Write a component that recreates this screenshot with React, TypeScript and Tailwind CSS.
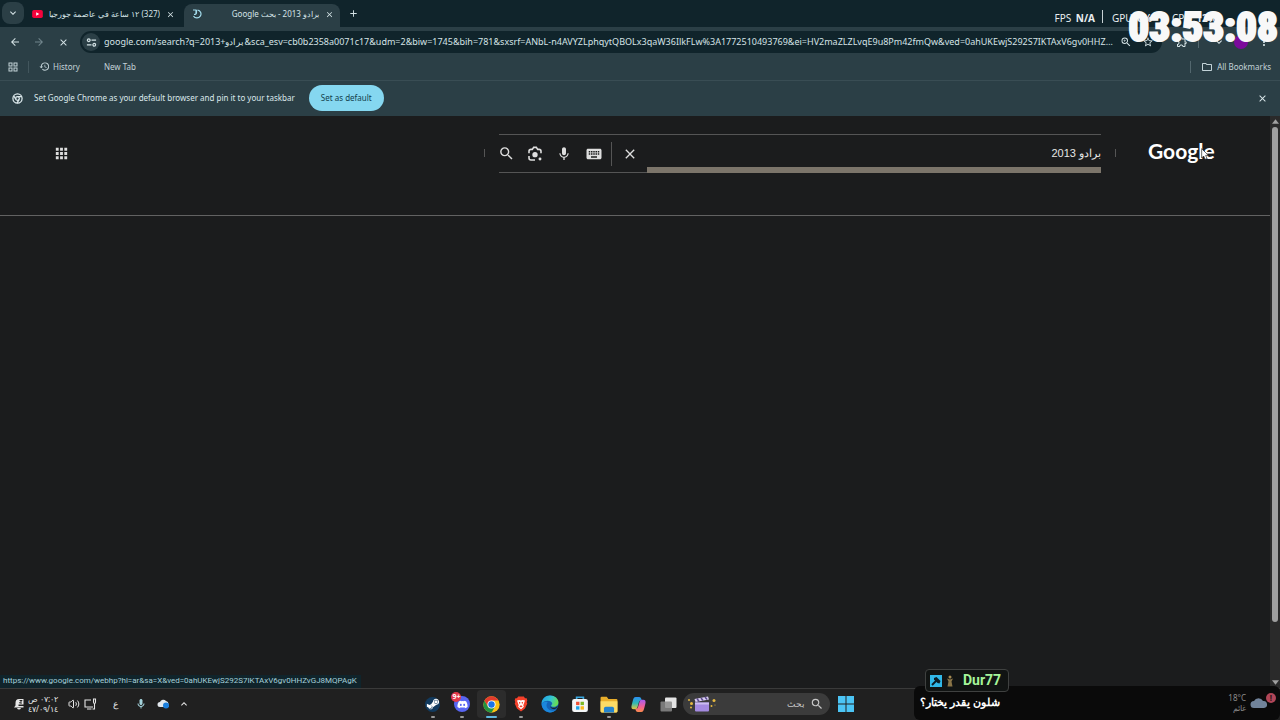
import type { ReactNode } from 'react'
import {
  MdAdd,
  MdApps,
  MdArrowBack,
  MdArrowForward,
  MdClose,
  MdExpandLess,
  MdExpandMore,
  MdHistory,
  MdKeyboard,
  MdMic,
  MdMoreVert,
  MdOutlineExtension,
  MdOutlineFolder,
  MdOutlineGridView,
  MdOutlineMic,
  MdSearch,
  MdStarBorder,
  MdZoomIn,
} from 'react-icons/md'
import { FaSteamSymbol, FaDiscord } from 'react-icons/fa'
import { Volume2 } from 'lucide-react'

const PAGE_URL =
  'google.com/search?q=2013+\u2068برادو\u2069&sca_esv=cb0b2358a0071c17&udm=2&biw=1745&bih=781&sxsrf=ANbL-n4AVYZLphqytQBOLx3qaW36IlkFLw%3A1772510493769&ei=HV2maZLZLvqE9u8Pm42fmQw&ved=0ahUKEwjS292S7IKTAxV6gv0HHZvGJ8MQPAgK'

function IconButton({
  label,
  className = '',
  children,
}: {
  label: string
  className?: string
  children: ReactNode
}) {
  return (
    <button
      type="button"
      aria-label={label}
      className={`flex shrink-0 items-center justify-center ${className}`}
    >
      {children}
    </button>
  )
}

function ChromeLogo({ className }: { className: string }) {
  return (
    <svg viewBox="0 0 48 48" className={className}>
      <circle cx="24" cy="24" r="23" fill="#fbc116" />
      <path d="M4.1 12.5A23 23 0 0 0 24 47l10-17.3-10-5.7-10 5.7Z" fill="#229342" />
      <path d="M4.1 12.5A23 23 0 0 1 43.9 12.5H24L14 29.5Z" fill="#e33b2e" />
      <circle cx="24" cy="24" r="11.5" fill="#fff" />
      <circle cx="24" cy="24" r="9" fill="#1a73e8" />
    </svg>
  )
}

function ChromeMono({ className }: { className: string }) {
  return (
    <svg viewBox="0 0 24 24" className={className} fill="none" stroke="currentColor" strokeWidth="2.8">
      <circle cx="12" cy="12" r="10" />
      <circle cx="12" cy="12" r="4" />
      <path d="M12 8h9M8.5 14 4 6.5M15.5 14 11 22" />
    </svg>
  )
}

function TuneIcon() {
  return (
    <svg viewBox="0 0 24 24" className="h-[11px] w-[11px]" fill="none" stroke="currentColor" strokeWidth="2.6">
      <path d="M12 7h10M2 17h10" />
      <circle cx="6" cy="7" r="3" />
      <circle cx="18" cy="17" r="3" />
    </svg>
  )
}

function LensIcon() {
  return (
    <svg viewBox="0 0 24 24" className="h-4 w-4" fill="none" stroke="currentColor" strokeWidth="2.4">
      <path d="M3 11V8q0-3 3-3h2l2-3h4l2 3h2q3 0 3 3v3M3 15v3q0 3 3 3h6" />
      <circle cx="12" cy="13" r="4" fill="currentColor" stroke="none" />
      <circle cx="19.5" cy="19.5" r="2.2" fill="currentColor" stroke="none" />
    </svg>
  )
}

function BellIcon() {
  return (
    <svg viewBox="0 0 24 24" className="h-3 w-3" fill="currentColor">
      <path d="M5 10q0-8 7-8h9v11H11v3h10v3H2l3-4ZM8 20h8q-1 3-4 3t-4-3Z" />
      <path d="M13 5h5l-5 5h5" fill="none" stroke="#202020" strokeWidth="2" />
    </svg>
  )
}

function DeviceIcon() {
  return (
    <svg viewBox="0 0 26 24" className="ml-1 h-3 w-[13px]" fill="none" stroke="currentColor" strokeWidth="2.2">
      <path d="M14 4H2v14h16M6 22h9M19 2v6q0 3 2 3t2-3V2ZM21 11v11h-4" />
    </svg>
  )
}

function BraveLogo() {
  return (
    <svg viewBox="0 0 24 28" className="h-4 w-4">
      <path d="M7 1h10l2 3 3 0 1 4-1 3 1 2-4 9-7 5-7-5-4-9 1-2-1-3 1-4h3Z" fill="#f4402a" />
      <path d="m5 8 4-1 3 1 3-1 4 1-3 8 1 3-5 4-5-4 1-3Z" fill="#fff" />
      <path d="m8 10 3 1-1 4ZM16 10l-3 1 1 4ZM9 18l3-2 3 2-3 2Z" fill="#f4402a" />
    </svg>
  )
}

function EdgeLogo() {
  return (
    <svg viewBox="0 0 32 32" className="h-[18px] w-[18px]">
      <defs>
        <linearGradient id="edge-top" x1="0" y1="0" x2="1" y2="0.3">
          <stop offset="0" stopColor="#1f9be8" />
          <stop offset="0.6" stopColor="#35c6d0" />
          <stop offset="1" stopColor="#66dc57" />
        </linearGradient>
      </defs>
      <circle cx="16" cy="16" r="15" fill="#1464b8" />
      <path d="M1 16C1 7 8 1 16 1c9 0 15 6 15 12 0 5-4 8-8 8-3 0-5-1-5-2s2-2 2-4c0-3-4-5-8-5-5 0-9 2-11 6Z" fill="url(#edge-top)" />
      <path d="M12 13c-3 3-3 9 1 12 4 4 10 4 15 0-3 4-7 6-12 6C9 31 2 26 1 17c2-4 6-6 11-4Z" fill="#1b87dc" />
      <path d="M17 15c-2 3-1 6 2 7 4 2 8 0 11-3-1 3-3 5-5 6-6 1-11-4-8-10Z" fill="#1d2526" />
    </svg>
  )
}

function StoreLogo() {
  return (
    <svg viewBox="0 0 32 32" className="h-[18px] w-[18px]">
      <path d="M10 8V4h12v4" fill="none" stroke="#3aa7df" strokeWidth="3" />
      <rect x="2" y="7" width="28" height="23" rx="4" fill="#f4f6f7" />
      <path d="M9 12h6v6H9Z" fill="#ef5136" />
      <path d="M17 12h6v6h-6Z" fill="#7dba24" />
      <path d="M9 20h6v6H9Z" fill="#1ca3e8" />
      <path d="M17 20h6v6h-6Z" fill="#fbb81b" />
    </svg>
  )
}

function ExplorerLogo() {
  return (
    <svg viewBox="0 0 32 30" className="h-[17px] w-[18px]">
      <path d="M1 3q0-2 2-2h9l3 4h14q2 0 2 2v20q0 2-2 2H3q-2 0-2-2Z" fill="#e9ae2b" />
      <path d="M1 9h30v18q0 2-2 2H3q-2 0-2-2Z" fill="#fbdb66" />
      <path d="M7 29v-7q0-3 3-3h12q3 0 3 3v7Z" fill="#2383cf" />
    </svg>
  )
}

function CopilotLogo() {
  return (
    <svg viewBox="0 0 32 32" className="h-[17px] w-[17px]">
      <defs>
        <linearGradient id="copilot-left" x1="0" y1="0" x2="0" y2="1">
          <stop offset="0" stopColor="#2b8ff2" />
          <stop offset="0.5" stopColor="#2fb9b5" />
          <stop offset="1" stopColor="#e9c83a" />
        </linearGradient>
        <linearGradient id="copilot-right" x1="0" y1="0" x2="0" y2="1">
          <stop offset="0" stopColor="#a65cf0" />
          <stop offset="0.55" stopColor="#f0609a" />
          <stop offset="1" stopColor="#fb8a4b" />
        </linearGradient>
      </defs>
      <path d="M22 8c-1-4-2-6-5-6h-6C7 2 6 6 5 10L3 18c-1 4 0 7 4 7h3c3 0 4-3 5-7l2-7c1-2 2-3 5-3Z" fill="url(#copilot-left)" />
      <path d="M10 24c1 4 2 6 5 6h6c4 0 5-4 6-8l2-8c1-4 0-7-4-7h-3c-3 0-4 3-5 7l-2 7c-1 2-2 3-5 3Z" fill="url(#copilot-right)" />
    </svg>
  )
}

function TaskViewIcon() {
  return (
    <svg viewBox="0 0 34 30" className="h-[15px] w-[17px]">
      <rect x="10" y="1" width="23" height="21" rx="2" fill="#e4e4e4" />
      <rect x="1" y="9" width="23" height="20" rx="2" fill="#8a8a8a" fillOpacity="0.85" />
    </svg>
  )
}

function ClapperIcon() {
  return (
    <svg viewBox="0 0 60 32" className="h-4 w-[30px]">
      <path d="M16 13h28v16q0 2-2 2H18q-2 0-2-2Z" fill="#a48ae0" />
      <path d="m15 6 27-5 2 6-27 5Z" fill="#d9cdf2" />
      <path d="m20 5 4 6M28 4l4 5M36 2l4 5" stroke="#5b4a8c" strokeWidth="3" />
      <path d="M16 13h28v4H16Z" fill="#cbbcf0" />
      <g fill="#e6b93f">
        <circle cx="4" cy="8" r="2" />
        <circle cx="9" cy="15" r="3" />
        <circle cx="8" cy="23" r="2" />
        <circle cx="54" cy="9" r="3" />
        <circle cx="49" cy="20" r="2" />
        <circle cx="56" cy="18" r="1" />
      </g>
    </svg>
  )
}

function WindowsLogo() {
  return (
    <svg viewBox="0 0 32 32" className="h-4 w-4" fill="#4cc5f5">
      <path d="M0 0h15v15H0ZM17 0h15v15H17ZM0 17h15v15H0ZM17 17h15v15H17Z" />
    </svg>
  )
}

function TabStrip() {
  return (
    <div className="flex h-[27px] items-end bg-[#10242b] text-[#d5e3e6]">
      <IconButton label="Search tabs" className="mb-[3px] ml-[2px] h-[22px] w-[22px] rounded-lg bg-[#2b3f46]">
        <MdExpandMore className="h-3 w-3" />
      </IconButton>
      <div className="flex h-[23px] w-[160px] items-center gap-[6px] pr-[9px] pb-[3px] pl-2">
        <svg viewBox="0 0 24 18" className="h-2 w-[11px] shrink-0">
          <rect width="24" height="18" rx="4" fill="#f5033c" />
          <path d="m9 5 7 4-7 4Z" fill="#fff" />
        </svg>
        <span dir="rtl" className="min-w-0 flex-1 overflow-hidden text-[8px] whitespace-nowrap">
          (327) ١٢ ساعة في عاصمة جورجيا
        </span>
        <IconButton label="Close tab">
          <MdClose className="h-[9px] w-[9px]" />
        </IconButton>
      </div>
      <div className="flex h-[23px] w-[156px] items-center gap-[6px] rounded-t-lg bg-[#2b3f46] pr-[6px] pb-[3px] pl-2">
        <svg viewBox="0 0 20 20" className="h-[10px] w-[10px] shrink-0" fill="none" stroke="#a4dcec" strokeWidth="2.4">
          <path d="M11 2a8 8 0 1 1-8 12M2 2l6 0 0 7M9 2v5q0 4-5 4" />
        </svg>
        <span dir="rtl" className="min-w-0 flex-1 overflow-hidden text-[8px] whitespace-nowrap">
          برادو 2013 - بحث Google
        </span>
        <IconButton label="Close tab">
          <MdClose className="h-[9px] w-[9px]" />
        </IconButton>
      </div>
      <IconButton label="New tab" className="h-[27px] w-[26px]">
        <MdAdd className="h-[11px] w-[11px]" />
      </IconButton>
    </div>
  )
}

function Toolbar() {
  return (
    <div className="flex h-7 items-center bg-[#2b3f46] pt-[2px] text-[#d5e3e6]">
      <IconButton label="Back" className="ml-[3px] w-6">
        <MdArrowBack className="h-3 w-3" />
      </IconButton>
      <IconButton label="Forward" className="w-6 text-[#71858c]">
        <MdArrowForward className="h-3 w-3" />
      </IconButton>
      <IconButton label="Stop" className="w-6">
        <MdClose className="h-[11px] w-[11px]" />
      </IconButton>
      <div className="ml-[5px] flex h-[22px] min-w-0 flex-1 items-center rounded-full bg-[#10242b] pr-[3px] pl-[2px]">
        <IconButton label="Site information" className="h-[18px] w-[18px] rounded-full bg-[#2b3f46]">
          <TuneIcon />
        </IconButton>
        <input
          aria-label="Address"
          defaultValue={PAGE_URL}
          className="ml-1 min-w-0 flex-1 truncate bg-transparent text-[9px] outline-none"
        />
        <IconButton label="Zoom" className="w-[22px]">
          <MdZoomIn className="h-3 w-3" />
        </IconButton>
        <IconButton label="Bookmark this tab" className="w-[22px]">
          <MdStarBorder className="h-3 w-3" />
        </IconButton>
      </div>
      <IconButton label="Extensions" className="ml-3 w-4">
        <MdOutlineExtension className="h-3 w-3" />
      </IconButton>
      <span className="mx-2 h-3 w-px bg-[#53676e]" />
      <IconButton label="Media" className="w-6">
        <MdExpandMore className="h-3 w-3" />
      </IconButton>
      <span className="ml-[3px] h-[14px] w-[14px] rounded-full bg-[#7b0a9c]" />
      <IconButton label="Menu" className="w-8">
        <MdMoreVert className="h-3 w-3" />
      </IconButton>
    </div>
  )
}

function BookmarksBar() {
  return (
    <nav className="flex h-[25px] items-center bg-[#2b3f46] pb-[2px] text-[8px] text-[#c3d3d8]">
      <IconButton label="Apps" className="ml-[7px]">
        <MdOutlineGridView className="h-3 w-3" />
      </IconButton>
      <span className="ml-[9px] h-3 w-px bg-[#42565d]" />
      <a href="#history" className="ml-[10px] flex items-center gap-[3px]">
        <MdHistory className="h-[11px] w-[11px]" />
        History
      </a>
      <a href="#new-tab" className="ml-6">
        New Tab
      </a>
      <span className="ml-auto h-3 w-px bg-[#53676e]" />
      <a href="#all" className="mr-[9px] ml-[10px] flex items-center gap-1">
        <MdOutlineFolder className="h-3 w-3" />
        All Bookmarks
      </a>
    </nav>
  )
}

function DefaultBrowserBar() {
  return (
    <div className="flex h-9 items-center border-t border-[#394d54] bg-[#2b3f46] pb-px text-[8px] text-[#dbe8eb]">
      <ChromeMono className="ml-3 h-[11px] w-[11px]" />
      <p className="ml-[11px]">Set Google Chrome as your default browser and pin it to your taskbar</p>
      <button type="button" className="ml-[14px] h-[26px] w-[75px] rounded-full bg-[#85d7f0] text-[#123f4d]">
        Set as default
      </button>
      <IconButton label="Dismiss" className="mr-3 ml-auto">
        <MdClose className="h-[11px] w-[11px]" />
      </IconButton>
    </div>
  )
}

function SearchHeader() {
  return (
    <header className="flex h-[100px] items-start border-b border-[#626262] pt-[18px] text-[#dedede]">
      <IconButton label="Google apps" className="mt-[11px] ml-[53px]">
        <MdApps className="h-[17px] w-[17px]" />
      </IconButton>
      <span className="mt-[15px] ml-auto h-2 w-px bg-[#555]" />
      <form
        className="relative mx-[14px] flex h-[39px] w-[47.4%] items-center border-y border-[#555]"
        onSubmit={(e) => e.preventDefault()}
      >
        <IconButton label="Search" className="w-[14px]">
          <MdSearch className="h-[17px] w-[17px] shrink-0" />
        </IconButton>
        <IconButton label="Search by image" className="ml-[14px] w-4">
          <LensIcon />
        </IconButton>
        <IconButton label="Voice search" className="ml-[13px] w-4">
          <MdMic className="h-4 w-4" />
        </IconButton>
        <IconButton label="Keyboard" className="ml-[13px] w-[17px]">
          <MdKeyboard className="h-[18px] w-[18px] shrink-0" />
        </IconButton>
        <span className="ml-[9px] h-6 w-px bg-[#555]" />
        <IconButton label="Clear" className="ml-[9px] w-[17px]">
          <MdClose className="h-4 w-4" />
        </IconButton>
        <input
          dir="rtl"
          aria-label="بحث"
          defaultValue="برادو 2013"
          className="ml-2 min-w-0 flex-1 bg-transparent font-['Liberation_Sans','Noto_Sans',sans-serif] text-[11px] text-[#e6e6e6] outline-none"
        />
        <span className="absolute right-0 -bottom-px left-[148px] h-[6px] bg-[#7c756a]" />
      </form>
      <span className="mt-[15px] h-2 w-px bg-[#555]" />
      <a
        href="#home"
        className="mr-14 ml-8 w-[66px] font-['Lato',sans-serif] text-[21px] leading-[34px] font-bold text-white"
      >
        Google
      </a>
    </header>
  )
}

function Scrollbar() {
  return (
    <div className="flex w-[10px] shrink-0 flex-col items-center justify-between bg-[#2a2a2a] py-[3px] text-[#a0a0a0]">
      <svg viewBox="0 0 8 5" className="h-[5px] w-[7px]" fill="currentColor">
        <path d="M4 0 8 5H0Z" />
      </svg>
      <div className="my-[3px] flex w-[6px] flex-1 flex-col">
        <div className="basis-[90%] rounded-full bg-[#9f9f9f]" />
      </div>
      <svg viewBox="0 0 8 5" className="h-[5px] w-[7px]" fill="currentColor">
        <path d="M4 5 0 0h8Z" />
      </svg>
    </div>
  )
}

function TaskbarApp({
  label,
  indicator = 'none',
  children,
}: {
  label: string
  indicator?: 'none' | 'open' | 'active'
  children: ReactNode
}) {
  return (
    <button
      type="button"
      aria-label={label}
      className={`relative flex h-7 flex-1 items-center justify-center rounded-sm ${indicator === 'active' ? 'bg-[#2c2c2c]' : ''}`}
    >
      {children}
      {indicator === 'open' && <span className="absolute bottom-0 h-[2px] w-1 rounded bg-[#9a9a9a]" />}
      {indicator === 'active' && <span className="absolute bottom-0 h-[2px] w-[11px] rounded bg-[#5fb8e0]" />}
    </button>
  )
}

function Taskbar() {
  return (
    <footer className="grid h-8 grid-cols-[1fr_auto_1fr] items-center border-t border-[#3a3a3a] bg-[#202020] pb-px text-[#e6e6e6]">
      <div className="flex items-center pl-[13px]">
        <BellIcon />
        <div dir="rtl" className="ml-[3px] w-8 text-left text-[8px] leading-[10px]">
          <p>٠٧:٠٢ ص</p>
          <p>٤٧/٠٩/١٤</p>
        </div>
        <Volume2 className="ml-2 h-3 w-3" />
        <DeviceIcon />
        <span className="ml-4 w-2 text-[9px]">ع</span>
        <MdOutlineMic className="ml-[14px] h-3 w-3 text-[#a4d3dc]" />
        <svg viewBox="0 0 26 20" className="ml-[10px] h-[10px] w-[13px]">
          <path d="M6 16a5 5 0 0 1 0-10 7 7 0 0 1 12-2 6 6 0 0 1 5 6v6Z" fill="#e2e8ed" />
          <circle cx="18" cy="13" r="6" fill="#1b7fdd" />
        </svg>
        <MdExpandLess className="ml-2 h-3 w-3" />
      </div>

      <div className="flex items-center">
        <div className="flex w-[265px]">
          <TaskbarApp label="Steam" indicator="open">
            <span className="flex h-[15px] w-[15px] items-center justify-center rounded-full bg-[#123a5e]">
              <FaSteamSymbol className="h-[14px] w-[14px] text-white" />
            </span>
          </TaskbarApp>
          <TaskbarApp label="Discord" indicator="open">
            <span className="flex h-4 w-4 items-center justify-center rounded-full bg-[#5865f2]">
              <FaDiscord className="h-[11px] w-[11px] text-white" />
            </span>
            <span className="absolute top-[2px] left-1 flex h-[10px] w-[10px] items-center justify-center rounded-full bg-[#e2384a] text-[7px] font-bold text-white">
              9+
            </span>
          </TaskbarApp>
          <TaskbarApp label="Chrome" indicator="active">
            <ChromeLogo className="h-[17px] w-[17px]" />
          </TaskbarApp>
          <TaskbarApp label="Brave" indicator="open">
            <BraveLogo />
          </TaskbarApp>
          <TaskbarApp label="Edge">
            <EdgeLogo />
          </TaskbarApp>
          <TaskbarApp label="Microsoft Store">
            <StoreLogo />
          </TaskbarApp>
          <TaskbarApp label="File Explorer" indicator="open">
            <ExplorerLogo />
          </TaskbarApp>
          <TaskbarApp label="Copilot">
            <CopilotLogo />
          </TaskbarApp>
          <TaskbarApp label="Task view">
            <TaskViewIcon />
          </TaskbarApp>
        </div>
        <button
          type="button"
          className="flex h-[22px] w-[147px] items-center rounded-full bg-[#3b3b3b] pr-[6px] pl-1 text-[9px] text-[#c8c8c8]"
        >
          <ClapperIcon />
          <span className="mr-[5px] ml-auto">بحث</span>
          <MdSearch className="h-[14px] w-[14px]" />
        </button>
        <IconButton label="Start" className="w-8">
          <WindowsLogo />
        </IconButton>
      </div>
    </footer>
  )
}

function ChatOverlay() {
  return (
    <aside className="absolute right-0 bottom-0 h-[34px] w-[366px] rounded-md bg-[#0a0a0a]">
      <div className="absolute -top-[17px] left-[11px] flex h-[23px] items-center rounded-sm border border-[#3f4140] bg-[#111413] px-1">
        <svg viewBox="0 0 24 24" className="h-3 w-3">
          <rect width="24" height="24" fill="#31b8e8" />
          <path d="m4 20 9-9" stroke="#0b1c24" strokeWidth="4" />
          <path d="m8 6 5-2 8 8-2 5-4-1-7-7Z" fill="#0b1c24" />
        </svg>
        <svg viewBox="0 0 16 24" className="ml-1 h-3 w-2">
          <circle cx="8" cy="4" r="3" fill="#a58b52" />
          <path d="m2 7 6 2 6-2-3 6 2 10H3l2-10Z" fill="#8a7547" />
        </svg>
        <span className="mr-[3px] ml-[9px] font-['Roboto',sans-serif] text-[14px] font-bold text-[#a5f59a]">Dur77</span>
      </div>
      <p dir="rtl" className="absolute top-[7px] left-[6px] text-[11px] leading-[18px] font-bold whitespace-nowrap text-white">
        شلون يقدر يختار؟
      </p>
      <div className="flex h-full items-center justify-end pr-1 text-[8px] leading-[10px] text-[#8b8b8b]">
        <div className="text-right">
          <p>18°C</p>
          <p>غائم</p>
        </div>
        <div className="relative ml-1">
          <svg viewBox="0 0 36 24" className="mr-2 h-3 w-[18px]" fill="#71839a">
            <path d="M8 22a7 7 0 0 1 0-14A10 10 0 0 1 26 8a7 7 0 0 1 2 14Z" />
          </svg>
          <span className="absolute -top-1 right-0 flex h-[10px] w-[10px] items-center justify-center rounded-full bg-[#b04658] text-[8px] font-bold text-[#2c1117]">
            !
          </span>
        </div>
      </div>
    </aside>
  )
}

function StatsOverlay() {
  return (
    <div className="absolute top-0 right-0 flex font-['Noto_Sans',sans-serif] text-[10px] leading-[14px] text-[#e9eef0]">
      <p className="mt-[11px]">
        FPS <b className="ml-[2px]">N/A</b>
      </p>
      <span className="mt-[10px] ml-[7px] h-[13px] w-px bg-[#c9d2d5]" />
      <p className="mt-[11px] ml-[9px] w-[60px]">
        GPU <b className="ml-[2px]">0%</b>
      </p>
      <p className="mt-[11px] w-[108px]">
        CPU <b className="ml-[2px]">12%</b>
      </p>
      <time className="absolute right-[2px] font-['Impact','Roboto_Condensed','Open_Sans_Condensed','Noto_Sans_Condensed','Roboto',sans-serif] text-[41px] leading-[54px] font-black text-[#f8f8f8] [-webkit-text-stroke:2px_#f8f8f8]">
        03:53:08
      </time>
    </div>
  )
}

export default function App() {
  return (
    <div className="relative flex min-h-screen flex-col overflow-hidden bg-[#1b1c1d] font-['Noto_Sans',sans-serif]">
      <TabStrip />
      <Toolbar />
      <BookmarksBar />
      <DefaultBrowserBar />
      <div className="flex flex-1">
        <main className="relative min-w-0 flex-1">
          <SearchHeader />
          <p className="absolute bottom-0 left-0 bg-[#10242b] pr-1 pb-px pl-[3px] font-['Roboto',sans-serif] text-[8px] leading-[12px] text-[#a5d0da]">
            https://www.google.com/webhp?hl=ar&amp;sa=X&amp;ved=0ahUKEwjS292S7IKTAxV6gv0HHZvGJ8MQPAgK
          </p>
          <svg viewBox="0 0 12 18" className="absolute top-8 right-[61px] h-3 w-2">
            <path d="M1 1v14l3-3 2 5 3-1-2-5h4Z" fill="#fff" stroke="#222" />
          </svg>
        </main>
        <Scrollbar />
      </div>
      <Taskbar />
      <StatsOverlay />
      <ChatOverlay />
    </div>
  )
}
